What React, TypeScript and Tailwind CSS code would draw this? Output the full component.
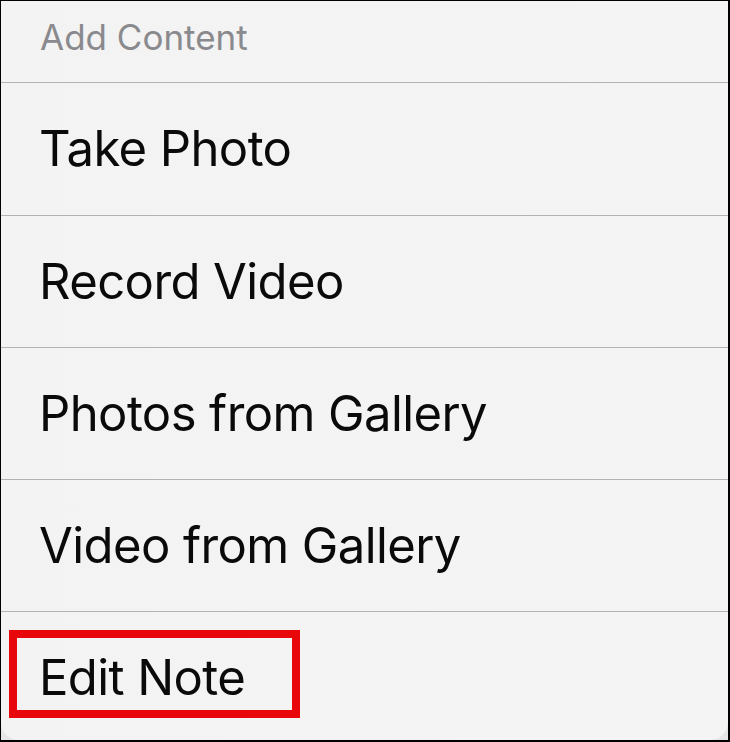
export default function App() {
  const items = ['Take Photo', 'Record Video', 'Photos from Gallery', 'Video from Gallery'];

  return (
    <div className="w-[730px] h-[742px] bg-black pt-px pl-px pr-[2px] pb-[2px]" style={{ fontFamily: 'Inter, "Noto Sans", sans-serif' }}>
      <div className="relative h-full w-full bg-[#e6e6e6] overflow-hidden">
        <div className="flex h-full flex-col rounded-b-[18px] bg-gradient-to-r from-[#f3f3f3] to-[#f4f4f4]">
          <div className="flex h-[82px] shrink-0 items-center border-b border-[#b3b3b3] pl-[39px] pb-[8px]">
            <span className="text-[35px] text-[#8a8a8e]">Add Content</span>
          </div>
          {items.map((item, i) => (
            <div
              key={item}
              className={
                i === 0
                  ? 'flex h-[133px] shrink-0 items-center border-b border-[#b3b3b3] pl-[38px]'
                  : 'flex h-[132px] shrink-0 items-center border-b border-[#b3b3b3] pl-[38px]'
              }
            >
              <span className="text-[49px] tracking-[-0.012em] text-[#0a0a0a]">{item}</span>
            </div>
          ))}
          <div className="flex h-[129px] shrink-0 items-center pl-[38px] pt-[2px]">
            <span className="text-[49px] tracking-[-0.012em] text-[#0a0a0a]">Edit Note</span>
          </div>
        </div>

        {/* highlight */}
        <div className="absolute left-[8px] top-[629px] h-[88px] w-[291px] border-[8px] border-[#e8080b]" />
      </div>
    </div>
  );
}
